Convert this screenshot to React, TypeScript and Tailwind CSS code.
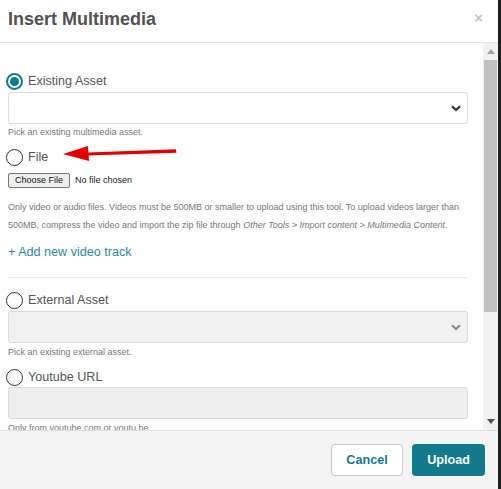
import React from "react";

const TEAL = "#127a8c";

function Radio({ checked }: { checked?: boolean }) {
  return checked ? (
    <span className="ml-[-2px] flex h-[17px] w-[17px] shrink-0 items-center justify-center rounded-full border-[2px] border-[#127a8c] bg-white">
      <span className="h-[9px] w-[9px] rounded-full bg-[#127a8c]" />
    </span>
  ) : (
    <span className="ml-[-2px] h-[17px] w-[17px] shrink-0 rounded-full border-[1.5px] border-[#333]" />
  );
}

function Chevron({ color }: { color: string }) {
  return (
    <svg width="10" height="7" viewBox="0 0 10 7">
      <path d="M1 1.2 L5 5 L9 1.2" fill="none" stroke={color} strokeWidth="2.2" />
    </svg>
  );
}

export default function App() {
  return (
    <div
      className="flex h-[489px] w-[501px] overflow-hidden bg-[#1e1e1e]"
      style={{ fontFamily: '"Liberation Sans", Arial, sans-serif' }}
    >
      <div className="flex h-full w-[498px] flex-col bg-white">
        {/* header */}
        <div className="flex h-[43px] shrink-0 items-center justify-between border-b border-[#e5e5e5] pl-[8px] pr-[15px]">
          <span className="mt-[-3px] text-[18px] font-bold text-[#525252]">Insert Multimedia</span>
          <span className="mt-[-7px] text-[15px] font-bold leading-none text-[#c4c4c4]">×</span>
        </div>

        {/* body */}
        <div className="flex h-[387px] shrink-0">
          <div className="flex-1 overflow-hidden pl-[8px] pr-[15px] pt-[28px] text-[#555]">
            <div className="flex h-[20px] items-center gap-[5px]">
              <Radio checked />
              <span className="text-[12.6px]">Existing Asset</span>
            </div>
            <div className="mt-[1px] flex h-[32px] items-center justify-end rounded-[3px] border border-[#dcdcdc] bg-white pr-[6px]">
              <Chevron color="#333" />
            </div>
            <div className="mt-[2px] h-[12px] text-[9px] leading-[12px] text-[#777]">
              Pick an existing multimedia asset.
            </div>

            <div className="relative mt-[9px] flex h-[20px] items-center gap-[5px]">
              <Radio />
              <span className="text-[12.6px]">File</span>
              <svg
                className="absolute left-[47px] top-[-4px]"
                width="126"
                height="20"
                viewBox="0 0 126 20"
              >
                <path d="M33 9.5 L121 6.2 L121.4 9.8 L33 12.5 Z" fill="#e60000" />
                <path d="M8 11 L33 3 L34 18 Z" fill="#e60000" />
              </svg>
            </div>
            <div className="mt-[6px] flex h-[15px] items-center gap-[5px]">
              <span className="flex h-[15px] w-[62px] items-center justify-center rounded-[2px] border border-[#767676] bg-[#efefef] text-[9px] text-[#111]">
                Choose File
              </span>
              <span className="text-[9px] text-[#222]">No file chosen</span>
            </div>

            <p className="mt-[10px] text-[9px] leading-[18px] text-[#777]">
              Only video or audio files. Videos must be 500MB or smaller to upload using this tool. To upload videos larger than 500MB, compress the video and import the zip file through{" "}
              <i>Other Tools &gt; Import content &gt; Multimedia Content</i>.
            </p>

            <div className="mt-[8px] flex h-[20px] items-center text-[12.6px] text-[#2a8a9c]">
              + Add new video track
            </div>

            <div className="mt-[15px] h-px bg-[#e8e8e8]" />

            <div className="mt-[12px] flex h-[20px] items-center gap-[5px]">
              <Radio />
              <span className="text-[12.6px]">External Asset</span>
            </div>
            <div className="mt-[1px] flex h-[32px] items-center justify-end rounded-[3px] border border-[#dcdcdc] bg-[#f1f1f1] pr-[6px]">
              <Chevron color="#8a8a8a" />
            </div>
            <div className="mt-[3px] h-[12px] text-[9px] leading-[12px] text-[#777]">
              Pick an existing external asset.
            </div>

            <div className="mt-[9px] flex h-[20px] items-center gap-[5px]">
              <Radio />
              <span className="text-[12.6px]">Youtube URL</span>
            </div>
            <div className="h-[32px] rounded-[3px] border border-[#dcdcdc] bg-[#eeeeee]" />
            <div className="mt-[3px] h-[12px] text-[9px] leading-[12px] text-[#777]">
              Only from youtube.com or youtu.be
            </div>
          </div>

          {/* scrollbar */}
          <div className="flex w-[15px] shrink-0 flex-col items-center bg-[#f1f1f1]">
            <div className="flex h-[17px] w-full items-center justify-center">
              <svg width="8" height="5" viewBox="0 0 8 5">
                <path d="M0 5 L4 0 L8 5 Z" fill="#a3a3a3" />
              </svg>
            </div>
            <div className="h-[252px] w-[13px] bg-[#c1c1c1]" />
            <div className="flex-1" />
            <div className="flex h-[17px] w-full items-center justify-center">
              <svg width="8" height="5" viewBox="0 0 8 5">
                <path d="M0 0 L8 0 L4 5 Z" fill="#505050" />
              </svg>
            </div>
          </div>
        </div>

        {/* footer */}
        <div className="flex flex-1 items-center justify-end gap-[9px] border-t border-[#dedede] bg-[#f4f4f4] pr-[13px]">
          <button className="h-[32px] w-[72px] rounded-[4px] border border-[#cccccc] bg-white text-[12.6px] font-bold text-[#127a8c]">
            Cancel
          </button>
          <button
            className="h-[32px] w-[73px] rounded-[4px] text-[12.6px] font-bold text-white"
            style={{ backgroundColor: TEAL }}
          >
            Upload
          </button>
        </div>
      </div>
      <div className="w-[3px]" />
    </div>
  );
}
